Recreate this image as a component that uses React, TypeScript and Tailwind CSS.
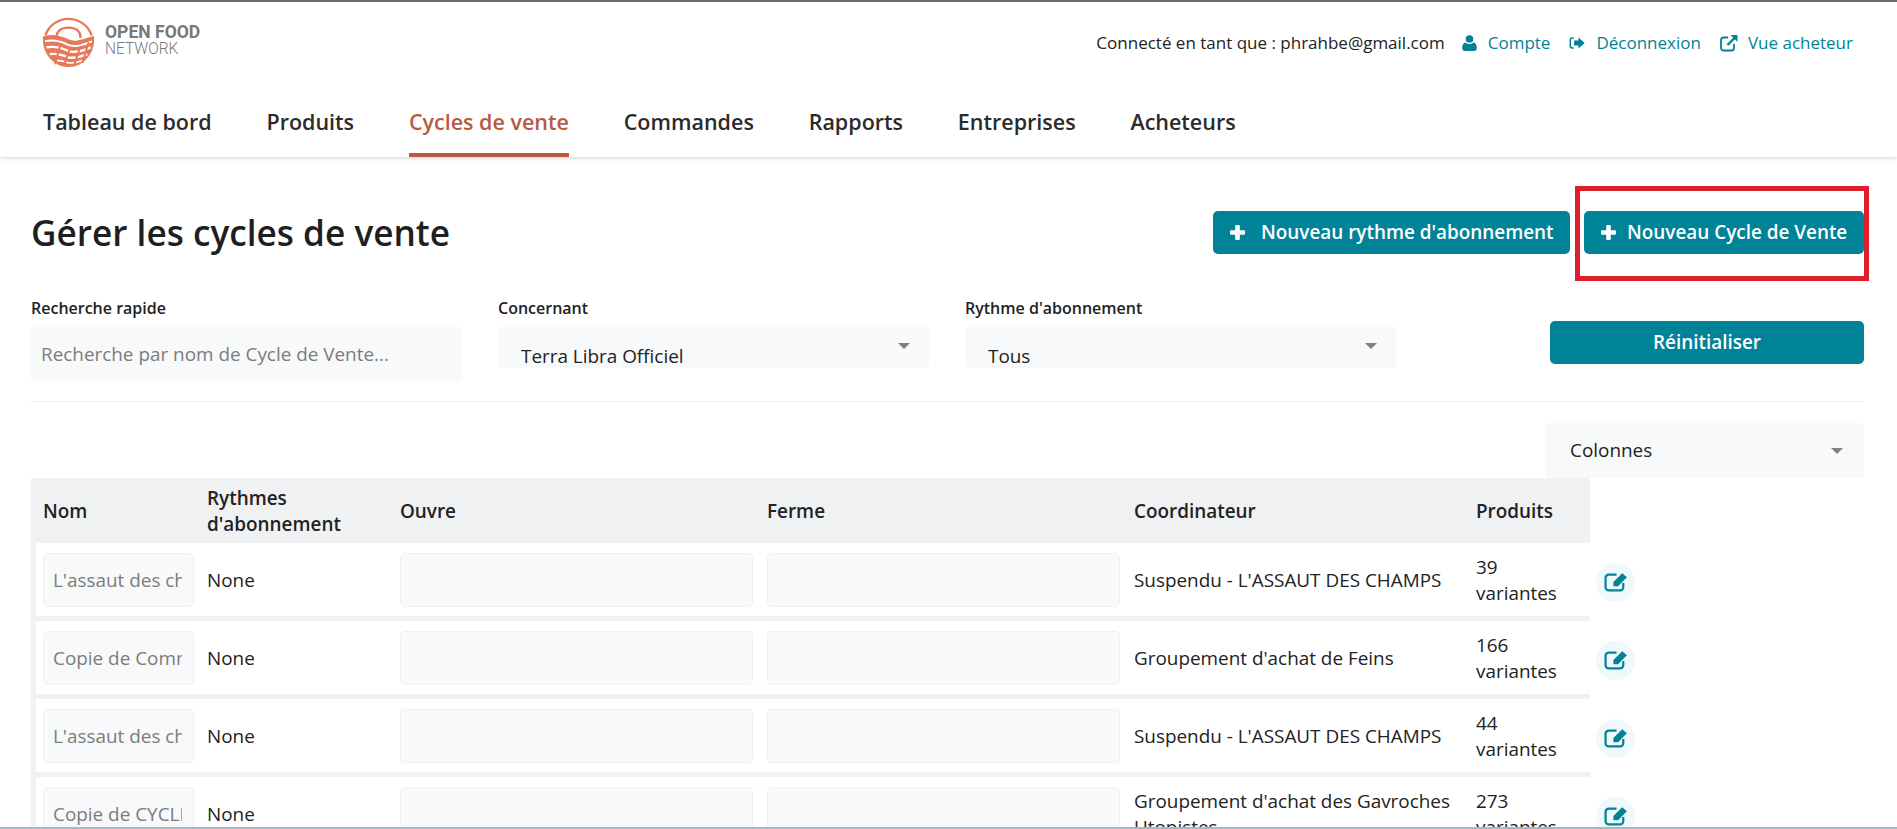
const navItems = [
  "Tableau de bord",
  "Produits",
  "Cycles de vente",
  "Commandes",
  "Rapports",
  "Entreprises",
  "Acheteurs",
];

const rows = [
  { name: "L'assaut des champs", coordinator: "Suspendu - L'ASSAUT DES CHAMPS", count: 39 },
  { name: "Copie de Commande", coordinator: "Groupement d'achat de Feins", count: 166 },
  { name: "L'assaut des champs", coordinator: "Suspendu - L'ASSAUT DES CHAMPS", count: 44 },
  { name: "Copie de CYCLE", coordinator: "Groupement d'achat des Gavroches Utopistes", count: 273 },
];

const Logo = () => (
  <div className="flex items-start gap-[11px] self-start">
    <svg viewBox="0 0 152 160" className="w-[51px] h-[54px]" fill="none" stroke="#e8785a" strokeWidth="7">
      <path d="M7 66A73 73 0 0 1 145 66" />
      <path d="M40 74C40 52 56 43 76 43C96 43 112 52 112 74" />
      <path d="M3 72C30 64 52 70 76 82C100 92 125 78 149 72C152 120 116 157 76 157C36 157 0 120 3 72Z" fill="#e8785a" />
      <path d="M6 84C32 78 54 84 76 95C100 104 124 92 146 84" stroke="#fff" strokeWidth="6" />
      <path d="M10 102C36 97 56 103 76 113C98 120 120 112 142 102" stroke="#fff" strokeWidth="7" />
      <path d="M20 122C40 119 60 125 76 132C94 136 112 130 132 122" stroke="#fff" strokeWidth="7" />
      <path d="M36 141C50 140 62 144 76 148C90 150 104 146 116 141" stroke="#fff" strokeWidth="5" />
      <path d="M52 92L36 152M82 100L62 157M112 98L92 157M136 86L118 148" strokeWidth="6" />
    </svg>
    <div className="font-['Roboto',sans-serif] text-[#77787b] pt-[10px]">
      <div className="text-[18.3px] leading-[17px] font-bold origin-left scale-x-[0.96]">OPEN FOOD</div>
      <div className="text-[17px] leading-[17px] font-light origin-left scale-x-[0.91]">NETWORK</div>
    </div>
  </div>
);

const UserIcon = () => (
  <svg viewBox="0 0 15 16" className="w-[15px] h-[16px]" fill="currentColor">
    <circle cx="7.5" cy="4" r="3.8" />
    <path d="M3.6 7.4C4.6 8.4 6 9 7.5 9s2.9-.6 3.9-1.6c2.2.4 3.4 2.6 3.4 5.6 0 1.8-1.2 3-2.8 3H3c-1.6 0-2.8-1.2-2.8-3 0-3 1.2-5.2 3.4-5.6z" />
  </svg>
);

const SignOutIcon = () => (
  <svg viewBox="0 0 18 14" className="w-[17px] h-[14px]" fill="currentColor">
    <path d="M5 1H3.2C1.6 1 .6 2.2.6 3.6v6.8C.6 11.8 1.6 13 3.2 13H5v-1.6H3.4c-.7 0-1.2-.5-1.2-1.2V3.8c0-.7.5-1.2 1.2-1.2H5z" />
    <path d="M10 1.2 16.6 7 10 12.8V9.6H5.4V4.4H10z" />
  </svg>
);

const ExternalIcon = () => (
  <svg viewBox="0 0 18 18" className="w-[18px] h-[18px]" fill="none" stroke="currentColor" strokeWidth="1.8">
    <path d="M8 3.5H3.5A2.5 2.5 0 0 0 1 6v8a2.5 2.5 0 0 0 2.5 2.5h8A2.5 2.5 0 0 0 14 14v-4" />
    <path d="M7.5 11 15.5 3" strokeWidth="2.4" />
    <path d="M10.5 1h7v7z" fill="currentColor" stroke="none" />
  </svg>
);

const EditIcon = () => (
  <svg viewBox="0 0 24 19" className="w-[25px] h-[20px] mb-[2px] ml-[1px]" fill="none" stroke="currentColor" strokeWidth="2.1">
    <path d="M12 2.5H4.5A3 3 0 0 0 1.5 5.5v9a3 3 0 0 0 3 3h11a3 3 0 0 0 3-3V10.5" />
    <path d="M9 9.5 17.5 1l4.5 4-8.5 8.5H9z" fill="currentColor" stroke="none" />
  </svg>
);

const PlusIcon = () => (
  <svg viewBox="0 0 15 15" className="w-[15px] h-[15px] shrink-0" fill="currentColor">
    <path d="M5.2 1a1 1 0 0 1 1-1h2.6a1 1 0 0 1 1 1v4.2H14a1 1 0 0 1 1 1v2.6a1 1 0 0 1-1 1H9.8V14a1 1 0 0 1-1 1H6.2a1 1 0 0 1-1-1V9.8H1a1 1 0 0 1-1-1V6.2a1 1 0 0 1 1-1h4.2z" />
  </svg>
);

const Caret = () => (
  <span className="block w-0 h-0 border-x-[6px] border-x-transparent border-t-[6px] border-t-[#7f8187]" />
);

const SelectBox = ({ label, value }: { label: string; value: string }) => (
  <div className="w-[431px] shrink-0">
    <p className="text-[16px] leading-[19px] font-semibold mb-[9px]">{label}</p>
    <div className="h-[41px] bg-[#f8f9fa] rounded-[4px] pl-[23px] pr-[19px] flex justify-between">
      <span className="text-[18.9px] leading-[24px] pt-[17px]">{value}</span>
      <span className="pt-[16px]">
        <Caret />
      </span>
    </div>
  </div>
);

const NewButton = ({ text, width, gap }: { text: string; width: string; gap: string }) => (
  <button className={`h-[43px] bg-[#008397] text-white rounded-[5px] flex items-center font-semibold text-[18.9px] pl-[17px] ${width} ${gap}`}>
    <PlusIcon />
    {text}
  </button>
);

const App = () => {
  return (
    <div className="h-[829px] overflow-hidden bg-white border-t-2 border-t-[#6b6870] border-b-2 border-b-[#a9b8bf] font-['Open_Sans',sans-serif] text-[#222222]">
      <header className="h-[155px] shadow-[0_1px_4px_rgba(0,0,0,0.18)] px-[43px]">
        <div className="flex justify-between pt-[11px] h-[88px]">
          <Logo />
          <div className="flex items-start pt-[18px] pr-[2px] text-[17px] leading-[24px] mr-[-1px]">
            <span className="mr-[17px]">Connecté en tant que : phrahbe@gmail.com</span>
            <a className="flex items-center text-[#008397] mr-[19px] gap-[11px]">
              <UserIcon />
              Compte
            </a>
            <a className="flex items-center text-[#008397] mr-[19px] gap-[10px]">
              <SignOutIcon />
              Déconnexion
            </a>
            <a className="flex items-center text-[#008397] gap-[10px]">
              <ExternalIcon />
              Vue acheteur
            </a>
          </div>
        </div>
        <nav className="flex gap-[54.8px] text-[21.5px] font-semibold h-[67px]">
          {navItems.map((item) => (
            <a
              key={item}
              className={
                item === "Cycles de vente"
                  ? "h-[67px] pt-[16px] text-[#b85a42] border-b-4 border-b-[#b85a42]"
                  : "h-[67px] pt-[16px] text-[#2b2b2b]"
              }
            >
              {item}
            </a>
          ))}
        </nav>
      </header>

      <main className="pl-[31px] pr-[33px]">
        <div className="flex justify-between items-start pt-[54px] h-[142px]">
          <h1 className="text-[35.2px] leading-[44px] font-semibold text-[#1f1f1f] mt-[-1px]">Gérer les cycles de vente</h1>
          <div className="flex gap-[14px]">
            <NewButton text="Nouveau rythme d'abonnement" width="w-[357px]" gap="gap-[16px]" />
            <div className="relative">
              <NewButton text="Nouveau Cycle de Vente" width="w-[280px]" gap="gap-[11px]" />
              <div className="absolute left-[-9px] right-[-5px] top-[-25px] bottom-[-27px] border-[5px] border-[#dc1f2b]" />
            </div>
          </div>
        </div>

        <div className="flex items-start gap-[36px] h-[103px] border-b border-b-[#eceef0]">
          <div className="w-[431px] shrink-0">
            <p className="text-[16px] leading-[19px] font-semibold mb-[9px]">Recherche rapide</p>
            <input
              placeholder="Recherche par nom de Cycle de Vente..."
              className="w-full h-[54px] bg-[#f8f9fa] rounded-[4px] px-[10px] text-[18.9px] placeholder:text-[#7c7c7c]"
            />
          </div>
          <SelectBox label="Concernant" value="Terra Libra Officiel" />
          <SelectBox label="Rythme d'abonnement" value="Tous" />
          <button className="ml-auto mt-[22px] w-[314px] h-[43px] bg-[#008397] text-white rounded-[5px] font-semibold text-[18.9px]">
            Réinitialiser
          </button>
        </div>

        <div className="flex justify-end pt-[21px]">
          <div className="w-[319px] h-[55px] bg-[#f8f9fa] rounded-[4px] pl-[25px] pr-[21px] flex items-center justify-between text-[18.9px]">
            Colonnes
            <Caret />
          </div>
        </div>

        <table className="table-fixed w-[1559px] border-separate border-spacing-0 text-[18.9px] leading-[26px]">
          <colgroup>
            <col className="w-[164px]" />
            <col className="w-[193px]" />
            <col className="w-[367px]" />
            <col className="w-[367px]" />
            <col className="w-[342px]" />
            <col className="w-[126px]" />
          </colgroup>
          <thead>
            <tr className="h-[65px] bg-[#f0f1f3] text-left">
              <th className="pl-[12px] font-semibold">Nom</th>
              <th className="pl-[12px] font-semibold">
                Rythmes
                <br />
                d'abonnement
              </th>
              <th className="pl-[12px] font-semibold">Ouvre</th>
              <th className="pl-[12px] font-semibold">Ferme</th>
              <th className="pl-[12px] font-semibold">Coordinateur</th>
              <th className="pl-[12px] font-semibold">Produits</th>
            </tr>
          </thead>
          <tbody>
            {rows.map((row) => (
              <tr key={row.count} className="h-[78px] [&>td]:border-b-[5px] [&>td]:border-b-[#f0f1f3]">
                <td className="border-l-[5px] border-l-[#f0f1f3] pl-[7px] pr-[1px]">
                  <input
                    placeholder={row.name}
                    className="w-full h-[54px] bg-[#f8f9fa] border border-[#eff0f2] rounded-[5px] pl-[9px] pr-[11px] placeholder:text-[#7c7c7c]"
                  />
                </td>
                <td className="pl-[12px]">None</td>
                <td className="pl-[12px] pr-[2px]">
                  <input className="block w-full h-[54px] bg-[#f8f9fa] border border-[#eff0f2] rounded-[5px]" />
                </td>
                <td className="pl-[12px] pr-[2px]">
                  <input className="block w-full h-[54px] bg-[#f8f9fa] border border-[#eff0f2] rounded-[5px]" />
                </td>
                <td className="pl-[12px] pr-[10px]">{row.coordinator}</td>
                <td className="pl-[12px] relative">
                  {row.count}
                  <br />
                  variantes
                  <button className="absolute left-[132px] top-[20px] w-[39px] h-[39px] rounded-full bg-[#eff9fb] text-[#008397] flex items-center justify-center">
                    <EditIcon />
                  </button>
                </td>
              </tr>
            ))}
          </tbody>
        </table>
      </main>
    </div>
  );
};

export default App;
